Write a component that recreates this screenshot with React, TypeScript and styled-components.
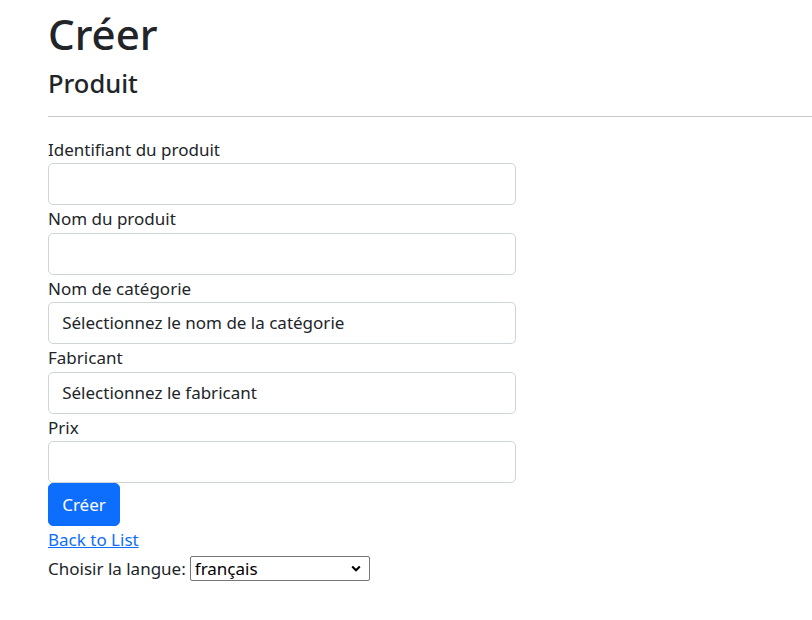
import React from "react";
import styled, { createGlobalStyle } from "styled-components";

const Global = createGlobalStyle`
  html, body { margin: 0; padding: 0; background: #fff; }
  body {
    font-family: "Noto Sans", "Open Sans", sans-serif;
    font-size: 17px;
    line-height: 1.5;
    color: #212529;
  }
`;

const Page = styled.main`
  padding: 9px 0 0 48px;
`;

const Title = styled.h1`
  margin: 0 0 8.8px;
  font-size: 42px;
  font-weight: 500;
  line-height: 1.2;
`;

const Subtitle = styled.h4`
  margin: 0 0 8.8px;
  font-size: 25.5px;
  font-weight: 500;
  line-height: 1.2;
`;

const Rule = styled.hr`
  margin: 17.6px 0 18.6px;
  border: 0;
  border-top: 1px solid #c8c9ca;
`;

const Form = styled.form`
  width: 468px;
  display: flex;
  flex-direction: column;
`;

const Label = styled.label`
  display: block;
  line-height: 27.4px;
`;

const Field = styled.input`
  box-sizing: border-box;
  display: block;
  width: 100%;
  height: 42px;
  padding: 6.6px 13.2px;
  font: inherit;
  color: #212529;
  background: #fff;
  border: 1px solid #ced4da;
  border-radius: 5px;
  outline: none;
`;

const Choice = styled.select`
  box-sizing: border-box;
  display: block;
  width: 100%;
  height: 42px;
  padding: 6.6px 13.2px;
  font: inherit;
  color: #212529;
  background: #fff;
  border: 1px solid #ced4da;
  border-radius: 5px;
  appearance: none;
  -webkit-appearance: none;
  outline: none;
`;

const Button = styled.button`
  align-self: flex-start;
  box-sizing: border-box;
  height: 43px;
  padding: 6.6px 13.2px;
  font: inherit;
  color: #fff;
  background: #0d6efd;
  border: 1px solid #0d6efd;
  border-radius: 5px;
`;

const BackLink = styled.a`
  display: inline-block;
  color: #0d6efd;
  text-decoration: underline;
  line-height: 28px;
`;

const LangRow = styled.div`
  display: flex;
  align-items: center;
  gap: 4px;
  height: 29px;
`;

const LangWrap = styled.span`
  position: relative;
  display: inline-flex;
`;

const LangSelect = styled.select`
  box-sizing: border-box;
  width: 180px;
  height: 25px;
  padding: 0 24px 0 4px;
  font: inherit;
  font-size: 17px;
  line-height: 23px;
  color: #000;
  background: #fff;
  border: 1px solid #767676;
  border-radius: 2px;
  appearance: none;
  -webkit-appearance: none;
  outline: none;
`;

const Chevron = styled.svg`
  position: absolute;
  right: 9px;
  top: 9px;
  width: 10px;
  height: 7px;
  pointer-events: none;
`;

export default function App() {
  return (
    <>
      <Global />
      <Page>
        <Title>Créer</Title>
        <Subtitle>Produit</Subtitle>
        <Rule />
        <Form onSubmit={(e) => e.preventDefault()}>
          <Label>Identifiant du produit</Label>
          <Field />
          <Label>Nom du produit</Label>
          <Field />
          <Label>Nom de catégorie</Label>
          <Choice defaultValue="">
            <option value="">Sélectionnez le nom de la catégorie</option>
          </Choice>
          <Label>Fabricant</Label>
          <Choice defaultValue="">
            <option value="">Sélectionnez le fabricant</option>
          </Choice>
          <Label>Prix</Label>
          <Field />
          <Button type="submit">Créer</Button>
        </Form>
        <div>
          <BackLink href="#">Back to List</BackLink>
        </div>
        <LangRow>
          <span>Choisir la langue:</span>
          <LangWrap>
            <LangSelect defaultValue="fr">
              <option value="fr">français</option>
              <option value="en">English</option>
            </LangSelect>
            <Chevron viewBox="0 0 10 7">
              <path d="M1.2 1.5 L5 5.3 L8.8 1.5" fill="none" stroke="#000" strokeWidth="2" />
            </Chevron>
          </LangWrap>
        </LangRow>
      </Page>
    </>
  );
}
